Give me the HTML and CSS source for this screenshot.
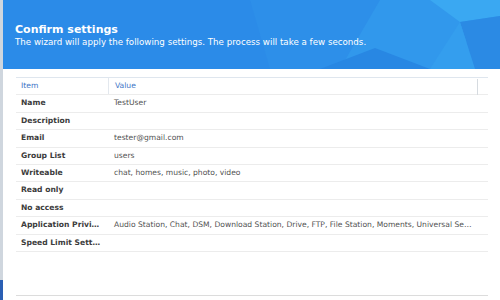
FILE: index.html
```html
<!DOCTYPE html>
<html>

<head>
    <meta charset="utf-8" />
    <title>Confirm settings</title>
    <link rel="stylesheet" href="styles.css">
</head>

<body>
    <div id="desk">
        <div class="edge">
            <div class="edge-blue"></div>
        </div>
        <div class="dialog">
            <div class="banner">
                <svg class="facets" width="500" height="69" viewBox="0 0 500 69" preserveAspectRatio="none">
                    <polygon points="250,0 400,0 340,69 270,69" fill="#2d8fe9" />
                    <polygon points="380,0 500,0 500,18 430,69 340,69" fill="#3198ec" />
                    <polygon points="430,0 500,0 500,16 460,22" fill="#3aa8f2" />
                    <polygon points="460,22 500,16 500,69 475,69" fill="#2b8ae4" />
                    <polygon points="430,69 460,22 475,69" fill="#349eee" />
                    <polygon points="320,69 375,48 430,69" fill="#2887e3" />
                </svg>
                <div class="banner-text">
                    <div class="heading">Confirm settings</div>
                    <div class="sub">The wizard will apply the following settings. The process will take a few seconds.</div>
                </div>
            </div>
            <div class="body">
                <div class="grid">
                    <div class="row head">
                        <div class="cell key">Item</div>
                        <div class="cell val">Value</div>
                        <div class="resize"></div>
                    </div>
                    <div class="row">
                        <div class="cell key">Name</div>
                        <div class="cell val">TestUser</div>
                    </div>
                    <div class="row">
                        <div class="cell key">Description</div>
                        <div class="cell val"></div>
                    </div>
                    <div class="row">
                        <div class="cell key">Email</div>
                        <div class="cell val">tester@gmail.com</div>
                    </div>
                    <div class="row">
                        <div class="cell key">Group List</div>
                        <div class="cell val">users</div>
                    </div>
                    <div class="row">
                        <div class="cell key">Writeable</div>
                        <div class="cell val">chat, homes, music, photo, video</div>
                    </div>
                    <div class="row">
                        <div class="cell key">Read only</div>
                        <div class="cell val"></div>
                    </div>
                    <div class="row">
                        <div class="cell key">No access</div>
                        <div class="cell val"></div>
                    </div>
                    <div class="row">
                        <div class="cell key">Application Privileges</div>
                        <div class="cell val">Audio Station, Chat, DSM, Download Station, Drive, FTP, File Station, Moments, Universal Search</div>
                    </div>
                    <div class="row">
                        <div class="cell key">Speed Limit Settings</div>
                        <div class="cell val"></div>
                    </div>
                </div>
                <div class="footer-line"></div>
            </div>
        </div>
    </div>
</body>

</html>
```

FILE: styles.css
```css
body {
    padding: 0;
    margin: 0;
    font-family: "DejaVu Sans", Verdana, sans-serif;
}

#desk {
    display: flex;
    width: 500px;
    height: 300px;
    overflow: hidden;
}

.edge {
    width: 3px;
    background-color: #cfd6de;
    display: flex;
    flex-direction: column;
    justify-content: flex-end;
}

.edge-blue {
    height: 20px;
    background-color: #2a5fb4;
}

.dialog {
    flex: 1;
    min-width: 0;
    background-color: #fff;
    display: flex;
    flex-direction: column;
}

.banner {
    position: relative;
    height: 69px;
    background-color: #2b8be8;
    overflow: hidden;
}

.facets {
    position: absolute;
    top: 0;
    left: -3px;
}

.banner-text {
    position: relative;
    padding: 23px 0 0 12px;
    color: #fff;
}

.heading {
    font-size: 11px;
    font-weight: bold;
    line-height: 13px;
}

.sub {
    font-size: 8.7px;
    line-height: 12px;
}

.body {
    width: 472px;
    padding: 8px 0 0 13px;
}

.grid {
    border-top: 1px solid #dfe6ee;
    height: 217px;
}

.row {
    position: relative;
    display: flex;
    height: 16.4px;
    border-bottom: 1px solid #ececec;
    font-size: 7.6px;
    line-height: 16.4px;
    color: #444;
}

.cell {
    min-width: 0;
    white-space: nowrap;
    overflow: hidden;
    text-overflow: ellipsis;
}

.key {
    flex: none;
    width: 79px;
    padding: 0 8px 0 5px;
    font-weight: bold;
    color: #3c3c3c;
}

.val {
    flex: 1;
    padding: 0 12px 0 6px;
    color: #525252;
}

.head .cell {
    font-weight: normal;
    color: #3d74c6;
}

.head .key {
    border-right: 1px solid #e3e8ee;
}

.resize {
    position: absolute;
    right: 10px;
    top: 1px;
    height: 16px;
    border-right: 1px solid #d6dbe0;
}

.footer-line {
    border-top: 1px solid #dcdcdc;
}
```
